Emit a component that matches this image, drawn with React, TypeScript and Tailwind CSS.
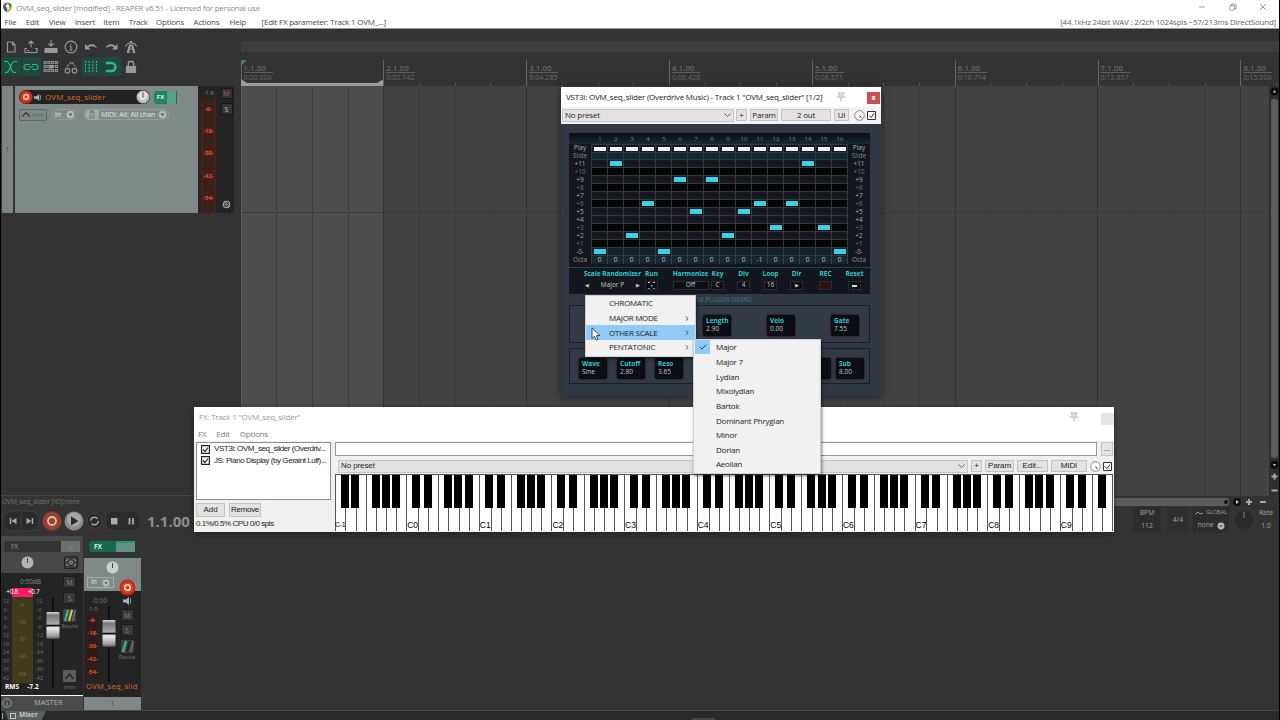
import type { ReactNode } from "react";

const MENU_BAR = ["File", "Edit", "View", "Insert", "Item", "Track", "Options", "Actions", "Help"];
const MENU_WIDTHS = ["w-[21.3px]", "w-[23px]", "w-[26px]", "w-[28.5px]", "w-[25.5px]", "w-[27.3px]", "w-[37.5px]", "w-[36px]", "w-[32px]"];

const BARS = [
  { bar: "1.1.00", time: "0:00.000" },
  { bar: "2.1.00", time: "0:02.142" },
  { bar: "3.1.00", time: "0:04.285" },
  { bar: "4.1.00", time: "0:06.428" },
  { bar: "5.1.00", time: "0:08.571" },
  { bar: "6.1.00", time: "0:10.714" },
  { bar: "7.1.00", time: "0:12.857" },
  { bar: "8.1.00", time: "0:15.000" },
];

const ROWS = ["+11", "+10", "+9", "+8", "+7", "+6", "+5", "+4", "+3", "+2", "+1", "-0-"];
const BLACK_ROWS = ["+10", "+8", "+6", "+3", "+1"];
const NOTES = [0, 11, 2, 6, 0, 9, 5, 9, 2, 5, 6, 3, 6, 11, 3, 0];

const SCALE_GROUPS = ["CHROMATIC", "MAJOR MODE", "OTHER SCALE", "PENTATONIC"];
const SCALES = ["Major", "Major 7", "Lydian", "Mixolydian", "Bartok", "Dominant Phrygian", "Minor", "Dorian", "Aeolian"];

const Icon = ({ children, active = false }: { children: ReactNode; active?: boolean }) => (
  <div className={`mr-[1px] flex h-[19px] w-[19px] shrink-0 items-center justify-center ${active ? "bg-[#1f493f] text-[#35b58a]" : "text-[#9a9a9a]"}`}>
    <svg className="size-[18px]" viewBox="0 0 18 18" fill="none" stroke="currentColor" strokeWidth="1.1">
      {children}
    </svg>
  </div>
);

const Toolbar = () => (
  <div className="flex h-[57px] w-[239.500px] shrink-0 flex-col gap-[1px] pl-[0.500px] pt-[8px]">
    <div className="flex">
      <Icon><path d="M5.500 4h5l2.500 2.500V14H5.500zM10.500 4v3H13" /></Icon>
      <Icon><path d="M9 9.500V3M6.500 5.500L9 3l2.500 2.500M5 10.500H3v4h12v-4h-2" /><path d="M5 12.500h2" /></Icon>
      <Icon><path d="M9 2v5M6.500 5.500L9 8l2.500-2.500" /><path d="M3 10.500h12v4H3z" fill="currentColor" /></Icon>
      <Icon><circle cx="9" cy="9" r="5.900" /><path d="M9 8v4M7.500 8H9M7.500 12.200h3M9 5.500v1" /></Icon>
      <Icon><path d="M3 6v5.500h5.500l-2-2c2-1.800 5.500-1.500 8.500 1-1-4.500-6-5.500-10-2.500z" fill="currentColor" stroke="none" /></Icon>
      <Icon><path d="M15.500 6v5.500H10l2-2C10 7.700 6.500 8 3.500 10.500c1-4.500 6-5.500 10-2.500z" fill="currentColor" stroke="none" /></Icon>
      <Icon><path d="M7 6.500h4l2.500 8.500h-3v-3h-3v3h-3zM8 3h2v2H8z" fill="currentColor" stroke="none" /><path d="M9 8v6" stroke="#333" /><path d="M3.500 8.500C4.500 5.500 6 5 9 5s4.500.5 5.500 3.500" /></Icon>
    </div>
    <div className="flex">
      <Icon active><path d="M2 3.500h2.500c4 0 4 11 8 11H14M15 3.500h-2.500c-4 0-4 11-8 11H3" /></Icon>
      <Icon active><path d="M8 6.500H4.500a2.500 2.500 0 000 5H8M10 6.500h3.500a2.500 2.500 0 010 5H10M6.500 9h5" /></Icon>
      <Icon>
        {[3, 7, 11].map((y) => [1.5, 5.3, 9.1, 12.9].map((x) => <rect key={`${x}-${y}`} x={x + 0.5} y={y + 0.5} width="2.200" height="2" strokeWidth="0.900" />))}
        <rect x="7.500" y="7" width="3.500" height="3.500" fill="currentColor" stroke="none" />
      </Icon>
      <Icon><circle cx="5.500" cy="12.700" r="2.300" /><circle cx="12.500" cy="12.700" r="2.300" /><path d="M5 8.500L9.500 4l4 4.500" strokeDasharray="2.500 1" /></Icon>
      <Icon active><path d="M3.500 3v12M7.200 3v12M10.900 3v12M14.600 3v12" strokeDasharray="2 1" /></Icon>
      <Icon active><path d="M4 5h5.500a4 4 0 010 8H4" strokeWidth="2.400" /></Icon>
      <Icon><path d="M4.500 8.500h9v6h-9z" fill="currentColor" /><path d="M6.300 8V6a2.700 2.700 0 015.400 0v2" strokeWidth="1.400" /></Icon>
    </div>
  </div>
);

const TitleBar = () => (
  <div className="h-[29px] shrink-0 border-b border-[#9a9a9a] bg-white text-[8px]">
    <div className="flex h-[15px] items-center pl-[1px] text-[#8c8c8c]">
      <svg className="size-[11px] shrink-0" viewBox="0 0 11 11">
        <path d="M5.500.5A5 5 0 001 3l4 7z" fill="#c8452f" />
        <path d="M5.500.5A5 5 0 0110 3L8 6.500 5.500 3z" fill="#3a9a55" />
        <path d="M1 3.500c0 4 2 6 4.500 7L5 6z" fill="#36618f" />
        <path d="M10 3.500c0 4-2 6-4.500 7L7 6z" fill="#d8a637" />
        <circle cx="5.500" cy="4" r="1.700" fill="#f3f3f3" />
      </svg>
      <span className="ml-[3px] tracking-[-0.22px]">OVM_seq_slider [modified] - REAPER v6.51 - Licensed for personal use</span>
      <svg className="ml-auto mr-[12px] h-[10px] w-[68px] -translate-y-px" viewBox="0 0 68 10" fill="none" stroke="#888" strokeWidth="0.800">
        <path d="M0 5h6M31 3.500h4.500v4.500H31zM32.500 3.500V2H37v4.500h-1.500M61 2l6 6M67 2l-6 6" />
      </svg>
    </div>
    <div className="flex h-[13px] items-center pl-[3.500px] text-[#4a4a4a]">
      {MENU_BAR.map((item, i) => (
        <span key={item} className={`shrink-0 tracking-[-0.22px] ${MENU_WIDTHS[i]}`}>{item}</span>
      ))}
      <span className="tracking-[-0.24px]">[Edit FX parameter: Track 1 OVM_...]</span>
      <span className="ml-auto mr-[3px] tracking-[-0.23px] text-[#666]">[44.1kHz 24bit WAV : 2/2ch 1024spls ~57/213ms DirectSound]</span>
    </div>
  </div>
);

const Ruler = () => (
  <div className="flex h-[57px] flex-1 flex-col overflow-hidden pt-[12px]">
    <div className="h-[11px] bg-[#3d3d3d]" />
    <div className="relative flex flex-1 items-end">
      {BARS.map(({ bar, time }, i) => (
        <div key={bar} className="relative flex h-[26px] w-[142.850px] shrink-0 items-end border-l border-[#666]">
          <div className="mb-[4px] self-end pl-[2px] text-[7.500px] leading-[8px] text-[#7d7d7d]">
            <div className="w-[29px] border-b border-[#5f5f5f] leading-[8px] tracking-[0.25px]">{bar}</div>
            <div className="text-[7px] leading-[9px] tracking-[0.05px] text-[#6c6c6c]">{time}</div>
          </div>
          <div className="absolute inset-x-0 bottom-0 flex h-[3px] justify-evenly">
            <i className="w-px bg-[#555]" /><i className="w-px bg-[#555]" /><i className="w-px bg-[#555]" />
          </div>
          {i === 0 && (
            <svg className="absolute -left-px bottom-0 h-[26px] w-[143px]" viewBox="0 0 143 26">
              <path d="M0 0h6L0 6z" fill="#45806f" />
              <path d="M0 23h143v3H0z" fill="#9b9b9b" />
              <path d="M0 19l6 4H0zM143 19l-7 4h7z" fill="#9b9b9b" />
            </svg>
          )}
        </div>
      ))}
    </div>
  </div>
);

const RoundArrow = ({ className }: { className: string }) => (
  <svg className={className} viewBox="0 0 10 10"><circle cx="5" cy="5" r="4.300" fill="#b4bab8" /><path d="M2.800 4h4.400L5 7z" fill="#525d59" /></svg>
);

const RecordDot = ({ className }: { className: string }) => (
  <svg className={className} viewBox="0 0 16 16"><circle cx="8" cy="8" r="7.500" fill="#c52b15" /><circle cx="8" cy="8" r="5.500" fill="#e43a20" /><circle cx="8" cy="8" r="2.700" fill="none" stroke="#fff0e8" strokeWidth="1.400" /></svg>
);

const Speaker = ({ className }: { className: string }) => (
  <svg className={className} viewBox="0 0 8 8" fill="#b0b5b3"><path d="M0 2.500h3L6 0v8L3 5.500H0zM7 1.500h.8v5H7z" /></svg>
);

const TrackPanel = () => (
  <div className="flex h-[127px] w-[239px] shrink-0 pl-[1px]">
    <div className="flex w-[11px] flex-col items-center justify-center bg-[#7b8582] text-[7px] text-[#46504d]">1</div>
    <div className="ml-[2px] w-[183px] bg-[#7f8a87] pl-[4px] pt-[4px]">
      <div className="flex items-center">
        <div className="flex h-[14px] w-[131px] items-center rounded-full bg-[#222] text-[8px] text-[#dc6a2c]">
          <RecordDot className="size-[14px]" />
          <Speaker className="ml-[1px] size-[7px]" />
          <span className="ml-[4px] tracking-[0.1px]">OVM_seq_slider</span>
          <svg className="ml-auto size-[14px]" viewBox="0 0 14 14"><circle cx="7" cy="7" r="6.500" fill="#b9b9b9" /><circle cx="7" cy="6" r="4.500" fill="#dedede" /><path d="M7 2.500v5" stroke="#444" /></svg>
        </div>
        <div className="ml-[4px] flex h-[13px] w-[23px] border-r border-[#4e5653]">
          <div className="flex w-[13px] items-center justify-center rounded-l-[3px] bg-[#208564] text-[6px] font-bold text-[#e0fff4]">FX</div>
          <div className="flex-1 bg-[#56a388]" />
        </div>
      </div>
      <div className="mt-[5px] flex h-[11px] items-center text-[7px] text-[#e4e8e6]">
        <div className="flex h-[12px] w-[28px] items-center justify-center gap-[2px] rounded-[2px] border border-[#5b6562] text-[6px] text-[#5b6562]">
          <svg className="h-[5px] w-[8px]" viewBox="0 0 8 5" fill="none" stroke="#2f3533" strokeWidth="1.200"><path d="M0 4.500L4 .8l4 3.700" /></svg>
          trim
        </div>
        <div className="ml-[5px] flex h-[11px] w-[26px] items-center justify-center gap-[5px] rounded-full border border-[#919b98]">
          in <RoundArrow className="size-[9px]" />
        </div>
        <div className="ml-[6px] flex h-[11px] w-[85px] items-center rounded-full border border-[#96a09d]">
          <span className="flex h-[10px] w-[14px] flex-col items-center justify-center rounded-l-full bg-[#a0a9a6] text-[5px] leading-[4.500px] text-[#48514e]"><i className="not-italic">IN</i><i className="not-italic">FX</i></span>
          <span className="ml-[2px] whitespace-nowrap text-[7px] tracking-[-0.1px]">MIDI: All: All chan</span>
          <RoundArrow className="ml-auto mr-[1px] size-[9px] shrink-0" />
        </div>
      </div>
    </div>
    <div className="flex w-[36px] justify-between bg-[#242424] pr-[1px] text-[6px]">
      <div className="flex w-[21px] flex-col items-center">
        <span className="h-[12px] leading-[15px] text-[#8d8d8d]">-1.9</span>
        <div className="flex w-[15px] flex-1 flex-col items-center justify-around border-x-2 border-[#4c2018] bg-[#38201b] pb-[4px] font-bold text-[#e4502a]">
          {["-6-", "-18-", "-30-", "-42-", "-54-"].map((db) => <span key={db} className="bg-[#47201a]">{db}</span>)}
        </div>
      </div>
      <div className="flex w-[13px] flex-col items-center pt-[2px] text-[7px]">
        <span className="flex h-[11px] w-[12px] items-center justify-center border border-[#171717] bg-[#393333] text-[#a25b55]">M</span>
        <span className="mt-[4px] flex h-[12px] w-[12px] items-center justify-center border border-[#171717] bg-[#353632] text-[#c9c998]">S</span>
        <svg className="mb-[4px] mt-auto size-[9px]" viewBox="0 0 9 9"><circle cx="4.500" cy="4.500" r="3.800" fill="#a0a0a0" /><circle cx="4.500" cy="4.500" r="2" fill="none" stroke="#333" /><path d="M2.500 6.500l4-4" stroke="#333" /></svg>
      </div>
    </div>
  </div>
);

const Arrange = () => (
  <div className="flex h-[410px] flex-1 overflow-hidden bg-[#434343]">
    {Array.from({ length: 29 }, (_, i) => (
      <div
        key={i}
        className={`w-[35.710px] shrink-0 border-l ${i === 0 ? "border-[#45665d]" : i % 4 === 0 ? "border-[#343434]" : "border-[#3d3d3d]"} ${i < 4 ? "bg-[#4d4d4d]" : ""}`}>
        <div className="h-[127px] border-b border-[#3b3b3b]" />
      </div>
    ))}
  </div>
);

const ScrollColumn = () => (
  <div className="flex h-[410px] w-[10px] shrink-0 flex-col items-center bg-[#2f2f2f]">
    <svg className="mt-px size-[9px] shrink-0" viewBox="0 0 9 9"><circle cx="4.500" cy="4.500" r="4" fill="#0c0c0c" /><path d="M3 5.500h3L4.500 3z" fill="#ccc" /></svg>
    <div className="mt-[3px] h-[359px] w-[7px] rounded-[3px] bg-[#5c5c5c]" />
    <svg className="mt-[2px] h-[36px] w-[9px] shrink-0" viewBox="0 0 9 36"><circle cx="4.500" cy="5" r="4" fill="#0c0c0c" /><path d="M3 4h3L4.500 6.500z" fill="#ccc" /><path d="M4.500 13.500v6M1.500 16.500h6M1.500 30.500h6" stroke="#aaa" strokeWidth="2" /></svg>
  </div>
);

const Transport = () => (
  <div className="flex h-[40px] shrink-0">
    <svg className="mt-[11px] h-[28px] w-[142px] shrink-0" viewBox="0 0 142 28" fill="none">
      <rect x="2" y="4" width="36" height="20" rx="9" fill="#2b2b2b" stroke="#414141" />
      <path d="M20 5v18" stroke="#414141" />
      <path d="M9.500 11v6M31.500 11v6" stroke="#aaa" strokeWidth="1.500" />
      <path d="M15.500 11v6l-5-3zM25.500 11v6l5-3z" fill="#aaa" />
      <circle cx="51" cy="14" r="9.500" fill="#954433" stroke="#6c372c" />
      <circle cx="51" cy="14" r="4" stroke="#e8bcae" strokeWidth="1.800" />
      <circle cx="73" cy="14" r="9.500" fill="#8a8a8a" />
      <circle cx="73" cy="12.500" r="7" fill="#a8a8a8" />
      <path d="M70 9.500v9l7.500-4.500z" fill="#2d2d2d" />
      <circle cx="93.500" cy="14" r="7.500" fill="#2a2a2a" stroke="#444" />
      <circle cx="93.500" cy="14" r="3.800" stroke="#a5a5a5" strokeWidth="1.500" strokeDasharray="9 3" />
      <rect x="104" y="4" width="36" height="20" rx="9" fill="#2b2b2b" stroke="#3b3b3b" />
      <path d="M110 11h6.500v6.500H110z" fill="#aaa" />
      <path d="M128.500 11v6.500M132 11v6.500" stroke="#aaa" strokeWidth="1.800" />
    </svg>
    <span className="mt-[14px] h-[24px] pl-[4px] text-[15px] font-bold leading-[22px] text-[#8e8e8e]">1.1.00</span>
    <div className="ml-auto mr-[4px] mt-[11px] flex h-[26px] text-[6.800px] text-[#a0a0a0]">
      <div className="flex w-[28px] flex-col items-center justify-around rounded-[3px] bg-[#2d2d2d]"><span>BPM</span><span>112</span></div>
      <div className="ml-[6px] flex w-[22px] items-center justify-center rounded-[3px] bg-[#2f2f2f]">4/4</div>
      <div className="ml-[4px] flex w-[36px] flex-col items-center justify-around rounded-[3px] bg-[#2d2d2d]">
        <span className="flex items-center gap-[2px] text-[5.500px]"><svg className="h-[4px] w-[9px]" viewBox="0 0 9 4" fill="none" stroke="#999"><path d="M0 3.500L3 1l2 2 3-1" /></svg>GLOBAL</span>
        <span className="flex items-center gap-[3px]">none <RoundArrow className="size-[8px]" /></span>
      </div>
      <svg className="ml-[5px] h-[26px] w-[20px]" viewBox="0 0 20 26"><circle cx="10" cy="13" r="9" fill="#292929" /><path d="M10 5v6" stroke="#888" /></svg>
      <div className="ml-[3px] flex w-[18px] flex-col items-center justify-around"><span>Rate</span><span>1.0</span></div>
    </div>
  </div>
);

const SmallButton = ({ children }: { children: ReactNode }) => (
  <div className="flex h-[12px] w-[13px] items-center justify-center rounded-[1px] border border-[#1b1b1b] bg-[#393939] text-[7px] text-[#888]">{children}</div>
);

const Fader = () => (
  <svg className="h-[90px] w-[16px]" viewBox="0 0 16 90">
    <defs>
      <linearGradient id="cap" x1="0" y1="0" x2="0" y2="1">
        <stop offset="0" stopColor="#ddd" /><stop offset=".12" stopColor="#777" /><stop offset=".45" stopColor="#aaa" />
        <stop offset=".5" stopColor="#111" /><stop offset=".58" stopColor="#eee" /><stop offset=".9" stopColor="#999" /><stop offset="1" stopColor="#444" />
      </linearGradient>
    </defs>
    <path d="M8 0v90" stroke="#0e0e0e" strokeWidth="2" />
    <rect x="1.500" y="14" width="13" height="27" rx="1" fill="url(#cap)" />
  </svg>
);

const Route = ({ second }: { second: string }) => (
  <svg className="h-[13px] w-[13px]" viewBox="0 0 13 13"><rect width="13" height="13" rx="1" fill="#414141" /><path d="M2 12L5 1" stroke="#36b184" strokeWidth="2.500" /><path d="M6 12L9 1" stroke={second} strokeWidth="2" /><path d="M9.500 12l3-11" stroke="#7b807d" strokeWidth="1" /></svg>
);

const MasterStrip = () => (
  <div className="flex h-[174px] w-[82px] flex-col bg-[#242424] text-[6.500px]">
    <div className="h-[37px] bg-[#484848] px-[3px] pt-[5px]">
      <div className="flex h-[11px] rounded-t-[3px] bg-[#343434] text-[#979797]">
        <span className="flex-1 pl-[7px] leading-[11px]">FX</span>
        <span className="flex w-[19px] items-center justify-center bg-[#68716e] text-[6px] text-[#8b9390]">◎</span>
      </div>
      <div className="flex h-[21px] items-center justify-between pl-[17px] pr-[2px]">
        <svg className="size-[13px]" viewBox="0 0 13 13"><circle cx="6.500" cy="6.500" r="6" fill="#b4b4b4" /><path d="M6.500 2v5" stroke="#444" /></svg>
        <div className="flex h-[13px] w-[14px] items-center justify-center rounded-[2px] border border-[#242424] bg-[#3a3a3a]">
          <svg className="h-[7px] w-[10px]" viewBox="0 0 10 7" fill="none" stroke="#aaa" strokeWidth="0.900"><path d="M2.500.5a3 3 0 000 6M7.500.5a3 3 0 010 6" /><circle cx="5" cy="3.500" r="1.500" /></svg>
        </div>
      </div>
    </div>
    <div className="flex flex-1">
      <div className="flex w-[44px] flex-col">
        <span className="h-[15px] pl-[19px] leading-[17px] text-[#888]">0:00dB</span>
        <div className="mx-auto flex h-[9px] w-[36px] items-center justify-center whitespace-nowrap tracking-[-0.3px] text-white">
          <span className="flex h-[9px] w-[21px] items-center justify-between rounded-[1px] bg-[#f81d60]"><i className="-ml-[6px] not-italic">+0.8</i><i className="-mr-[6px] not-italic">+0.7</i></span>
        </div>
        <div className="flex h-[86px] justify-between text-[5.500px] leading-none text-[#6f6f6f]">
          <div className="flex w-[10px] flex-col items-center justify-between py-[2px]">{["12", "6-", "0-", "6-", "12", "18", "24", "30", "36", "42"].map((v, i) => <span key={i}>{v}</span>)}</div>
          <div className="flex w-[21px] flex-col items-center justify-around bg-[#403b1b] text-[#7b733a]">{["-6-", "-18-", "-30-", "-42-", "-54-"].map((v) => <span key={v}>{v}</span>)}</div>
          <div className="flex w-[11px] flex-col items-center justify-between py-[2px]">{["12", "-6", "-0", "-6", "-12", "-18", "-24", "-30", "-36", "-42"].map((v, i) => <span key={i}>{v}</span>)}</div>
        </div>
        <div className="flex justify-between pl-[4px] pr-[6px] font-bold leading-[8px] text-white"><span>RMS</span><span>-7.2</span></div>
      </div>
      <div className="w-[17px] pt-[25px]"><Fader /></div>
      <div className="flex flex-1 flex-col items-center pr-[5px] pt-[3px]">
        <SmallButton>M</SmallButton>
        <div className="mt-[4px]"><SmallButton>S</SmallButton></div>
        <div className="mt-[5px]"><Route second="#d6ca48" /></div>
        <span className="text-[6px] leading-[8px] text-[#777]">Route</span>
        <svg className="mt-auto h-[13px] w-[13px]" viewBox="0 0 13 13"><rect width="13" height="12" rx="1" fill="#5c5c5c" /><path d="M2.500 9L6.500 4l4 5" fill="none" stroke="#222" strokeWidth="1.300" /></svg>
        <span className="mb-[3px] text-[6px] leading-[9px] text-[#777]">trim</span>
      </div>
    </div>
    <div className="flex h-[15px] items-center border-t border-t-white bg-[#4b4b4b] pl-[1px] text-[7.500px] text-[#b5b5b5]">
      <svg className="size-[10px]" viewBox="0 0 10 10" fill="none" stroke="#999"><circle cx="5" cy="5" r="4.300" /><path d="M5 4.500v3M5 2.500v1" /></svg>
      <span className="ml-[22px]">MASTER</span>
    </div>
  </div>
);

const TrackStrip = () => (
  <div className="ml-[1px] flex h-[174px] w-[57px] flex-col bg-[#242424] text-[6.500px]">
    <div className="h-[22px] bg-[#333] pl-[5px] pt-[5px]">
      <div className="flex h-[11px] w-[46px]">
        <span className="flex-1 rounded-l-[3px] bg-[#17694f] pl-[5px] font-bold leading-[11px] text-[#d5efe5]">FX</span>
        <span className="w-[19px] border-t-2 border-[#259b74] bg-[#658f82]" />
      </div>
    </div>
    <div className="relative h-[33px] bg-[#7f8a87] pt-[3px]">
      <svg className="mx-auto size-[13px]" viewBox="0 0 13 13"><circle cx="6.500" cy="6.500" r="6" fill="#cbd0ce" /><path d="M6.500 2v5" stroke="#444" /></svg>
      <div className="ml-[3px] mt-[3px] flex h-[11px] w-[27px] items-center justify-center gap-[5px] border border-[#a5aeab] text-[#e0e4e2]">in <RoundArrow className="size-[8px]" /></div>
      <RecordDot className="absolute -bottom-[5px] right-[5px] size-[17px]" />
    </div>
    <div className="flex flex-1">
      <div className="flex w-[17px] flex-col items-center">
        <span className="mt-[6px] whitespace-nowrap pl-[14px] leading-[8px] text-[#777]">-0:00</span>
        <span className="text-[6px] leading-[9px] text-[#8d7368]">-1.9</span>
        <div className="flex h-[64px] w-[11px] flex-col items-center justify-around bg-[#2e1c17] text-[6px] font-bold leading-none text-[#e4502a]">{["-6-", "-18-", "-30-", "-42-", "-54-"].map((v) => <span key={v}>{v}</span>)}</div>
      </div>
      <div className="h-[91px] w-[16px] overflow-hidden pt-[15px]"><Fader /></div>
      <div className="flex flex-1 flex-col items-center pr-[4px] pt-[6px]">
        <Speaker className="size-[8px]" />
        <div className="mt-[4px]"><SmallButton>M</SmallButton></div>
        <div className="mt-[3px]"><SmallButton>S</SmallButton></div>
        <div className="mt-[4px]"><Route second="#222" /></div>
        <span className="text-[6px] leading-[8px] text-[#777]">Route</span>
      </div>
    </div>
    <div className="h-[15px] whitespace-nowrap pl-[2px] text-[7.500px] leading-[9px] tracking-[0.3px] text-[#dc6a2c]">OVM_seq_slid</div>
    <div className="flex h-[13px] items-center justify-center bg-[#7f8a87] text-[7px] text-[#47504d]">1</div>
  </div>
);

const Pin = ({ className }: { className: string }) => (
  <svg className={className} viewBox="0 0 10 10" fill="none" stroke="#aaa" strokeWidth="0.900"><path d="M1.500 1h7M3 1v3.500M7 1v3.500M.5 5h9M5 5v4.500M4 3h2" /></svg>
);

const WinButton = ({ children, className }: { children: ReactNode; className: string }) => (
  <div className={`flex h-[12px] shrink-0 items-center justify-center border border-[#c4c4c4] bg-[#e3e3e3] ${className}`}>{children}</div>
);

const Preset = ({ className }: { className: string }) => (
  <div className={`flex h-[13px] shrink-0 items-center justify-between border border-[#c6c6c6] bg-[#e2e2e2] px-[2px] ${className}`}>
    No preset
    <svg className="h-[4px] w-[7px]" viewBox="0 0 7 4" fill="none" stroke="#555" strokeWidth="0.900"><path d="M.5.5l3 3 3-3" /></svg>
  </div>
);

const WetAndBypass = () => (
  <>
    <svg className="size-[11px] shrink-0" viewBox="0 0 11 11" fill="none" stroke="#888"><circle cx="5.500" cy="5.500" r="4.800" fill="#fafafa" /><path d="M5.500 5.500l2 2.500" stroke="#333" /></svg>
    <svg className="ml-[2px] size-[9px] shrink-0" viewBox="0 0 9 9" fill="#fff" stroke="#333"><path d="M.5.5h8v8h-8z" /><path d="M2 4.500l2 2 3-4" fill="none" /></svg>
  </>
);

const FaderRow = ({ label }: { label: string }) => (
  <div className="flex h-[8px]">
    {NOTES.map((note, i) => (
      <div
        key={i}
        className={`flex w-[16px] items-center justify-center border-b border-r border-[#36363e] ${label === "-0-" ? "bg-[#14222b]" : BLACK_ROWS.includes(label) ? "bg-[#060609]" : "bg-[#17171f]"}`}>
        {note === (label === "-0-" ? 0 : Number(label)) && <div className="h-[5px] w-[12px] bg-[#35d5e4]" />}
      </div>
    ))}
  </div>
);

const RowLabels = () => (
  <div className="flex w-[23px] flex-col items-center text-[6.500px] leading-[8px] text-[#a9adb0]">
    <span>Play</span>
    <span className="text-[#81868a]">Slide</span>
    {ROWS.map((r) => <span key={r} className={BLACK_ROWS.includes(r) ? "text-[#6b6f73]" : ""}>{r}</span>)}
    <span className="text-[#8b9094]">Octa</span>
  </div>
);

const Control = ({ label, className, children }: { label: string; className: string; children?: ReactNode }) => (
  <div className={`flex shrink-0 flex-col items-center ${className}`}>
    <span className="whitespace-nowrap text-[6.500px] font-bold leading-[9px] text-[#32c8cf]">{label}</span>
    <span className="mt-[3px] flex h-[9px] w-full items-center justify-center">{children}</span>
  </div>
);

const Cell = ({ children, className = "w-[13px] bg-[#0d0e13]" }: { children?: ReactNode; className?: string }) => (
  <span className={`flex h-[9px] items-center justify-center border border-[#292c33] ${className}`}>{children}</span>
);

const Knob = ({ label, value }: { label: string; value: string }) => (
  <div className="flex h-[21px] w-[28px] shrink-0 flex-col justify-center rounded-[2px] border border-[#0a0b0e] bg-[#0c0e13] pl-[2px] text-[6.500px] leading-[8px] shadow-[0_0_2px_#090a0d]">
    <span className="font-bold text-[#32c8cf]">{label}</span>
    <span className="text-[#c5c8ca]">{value}</span>
  </div>
);

const PluginWindow = () => (
  <div className="absolute left-[560px] top-[87px] flex h-[309px] w-[320px] flex-col bg-[#2f3843] text-[8px] text-[#222] shadow-[0_1px_8px_rgba(0,0,0,0.5)]">
    <div className="flex h-[20px] shrink-0 items-center bg-white pb-px pl-[5px]">
      <span className="whitespace-nowrap tracking-[-0.2px]">VST3i: OVM_seq_slider (Overdrive Music) - Track 1 "OVM_seq_slider" [1/2]</span>
      <Pin className="ml-auto mr-[21px] size-[10px]" />
      <div className="mr-px mt-[2px] flex h-[12px] w-[13px] items-center justify-center bg-[#c75050] pb-px text-[7px] font-bold text-white">x</div>
    </div>
    <div className="flex h-[17px] shrink-0 items-center bg-[#f2f2f2] pb-[1px] pl-[1px] tracking-[-0.2px]">
      <Preset className="w-[172px]" />
      <WinButton className="ml-[2px] w-[11px]">+</WinButton>
      <WinButton className="ml-[3px] w-[28px]">Param</WinButton>
      <WinButton className="ml-[3px] w-[50px]">2 out</WinButton>
      <WinButton className="ml-[3px] mr-[5px] w-[15px]">UI</WinButton>
      <WetAndBypass />
    </div>
    <div className="mx-[8px] mt-[9px] h-[134px] w-[301px] shrink-0 bg-[#14161d]">
      <div className="flex h-[11px] items-center bg-gradient-to-b from-[#0b0c10] to-[#122b32] pl-[23px] text-[6px] text-[#4c908f]">
        {NOTES.map((_, i) => <span key={i} className="w-[16px] text-center">{i + 1}</span>)}
      </div>
      <div className="flex">
        <RowLabels />
        <div className="w-[257px] border-l border-t border-[#36363e]">
          <div className="flex h-[7px]">
            {NOTES.map((_, i) => <div key={i} className="flex w-[16px] items-center justify-center border-r border-[#36363e]"><div className="h-[4px] w-[12px] bg-[#eef3f4]" /></div>)}
          </div>
          <div className="flex h-[8px] bg-[#142730]">
            {NOTES.map((_, i) => <div key={i} className="w-[16px] border-y border-r border-[#273c46]" />)}
          </div>
          {ROWS.map((label) => <FaderRow key={label} label={label} />)}
          <div className="flex h-[8px] bg-[#15252e] text-[6.500px] leading-[8px] text-[#bfc4c6]">
            {NOTES.map((_, i) => <div key={i} className="w-[16px] border-r border-[#36434b] text-center">{i === 10 ? "-1" : "0"}</div>)}
          </div>
        </div>
        <RowLabels />
      </div>
    </div>
    <div className="mx-[8px] h-[27px] w-[301px] shrink-0 border-t border-[#353d47] bg-[#14161d] pt-[1px] text-[6.500px] text-[#c5c8ca]">
      <div className="flex pl-[15.500px]">
        <Control label="Scale Randomizer" className="w-[56px]">
          <span className="flex w-full items-center justify-between text-[6.500px]"><i className="text-[5px] not-italic">◀</i>Major P<i className="text-[5px] not-italic">▶</i></span>
        </Control>
        <Control label="Run" className="w-[22px]">
          <Cell><svg className="size-[7px]" viewBox="0 0 8 8" fill="#ccc"><path d="M0 0h2v1H0zM6 0h2v1H6zM3.500 3.500h1.500v1.500H3.500zM0 7h2v1H0zM6 7h2v1H6z" /></svg></Cell>
        </Control>
        <Control label="Harmonize" className="ml-[10px] w-[36px]"><Cell className="w-full bg-[#0d0e13]">Off</Cell></Control>
        <Control label="Key" className="w-[18px]"><Cell>C</Cell></Control>
        <Control label="Div" className="ml-[8px] w-[18px]"><Cell>4</Cell></Control>
        <Control label="Loop" className="ml-[8px] w-[20px]"><Cell>16</Cell></Control>
        <Control label="Dir" className="ml-[7px] w-[18px]"><Cell><i className="text-[5px] not-italic">▶</i></Cell></Control>
        <Control label="REC" className="ml-[10px] w-[20px]"><Cell className="w-[13px] bg-[#300d11]" /></Control>
        <Control label="Reset" className="ml-[8px] w-[22px]"><Cell><i className="h-[2px] w-[5px] bg-[#ddd]" /></Cell></Control>
      </div>
    </div>
    <div className="ml-[127px] h-[9px] whitespace-nowrap text-[6.800px] leading-[11px] text-[#3f7781]">OVM PLUGIN DEMO</div>
    <div className="ml-[8px] mt-[2px] flex h-[38px] w-[301px] shrink-0 items-center justify-end gap-[36px] border border-[#1a1f26] bg-[#313a45] pr-[10px] pt-[2px]">
      <Knob label="Length" value="2.90" />
      <Knob label="Velo" value="0.00" />
      <Knob label="Gate" value="7.55" />
    </div>
    <div className="ml-[8px] mt-[5px] flex h-[36px] w-[301px] shrink-0 items-center gap-[10px] border border-[#1a1f26] bg-[#313a45] pl-[9px] pr-[5px] pt-[4px]">
      <Knob label="Wave" value="Sine" />
      <Knob label="Cutoff" value="2.80" />
      <Knob label="Reso" value="3.65" />
      <div className="ml-auto flex gap-[5px]">
        <Knob label="" value="" />
        <Knob label="Sub" value="8.00" />
      </div>
    </div>
  </div>
);

const Key = ({ index }: { index: number }) => {
  const step = index % 7;
  const hasBlack = step !== 2 && step !== 6 && index !== 74;
  return (
    <div className="relative flex flex-1 items-end border-l border-[#555] pb-[1px]">
      {step === 0 && (
        <span className={`whitespace-nowrap leading-[10px] text-black ${index === 0 ? "-ml-px text-[7px] tracking-[-0.3px]" : "text-[8.500px]"}`}>C{index / 7 - 1}</span>
      )}
      {hasBlack && <div className="absolute left-[5px] top-0 z-10 h-[33px] w-[8px] bg-black" />}
    </div>
  );
};

const FxItem = ({ children }: { children: ReactNode }) => (
  <div className="flex h-[11.500px] items-center whitespace-nowrap">
    <svg className="mr-[4px] size-[9px] shrink-0" viewBox="0 0 9 9" fill="none" stroke="#222" strokeWidth="1.200"><path d="M.6.6h7.800v7.800H.6z" /><path d="M2 4.500l2 2 3-4" /></svg>
    {children}
  </div>
);

const FxWindow = () => (
  <div className="absolute left-[193px] top-[407px] flex h-[125px] w-[920px] flex-col bg-[#f0f0f0] text-[8px] text-[#222] shadow-[0_1px_6px_rgba(0,0,0,0.4)]">
    <div className="flex h-[20px] shrink-0 items-center bg-white pl-[5px] text-[#9a9a9a]">
      <span className="tracking-[-0.2px]">FX: Track 1 "OVM_seq_slider"</span>
      <Pin className="ml-auto mr-[22px] size-[10px]" />
      <div className="mt-[3px] h-[12px] w-[13px] bg-[#e6e6e6]" />
    </div>
    <div className="flex h-[14px] shrink-0 items-center gap-[10px] bg-white pl-[4px] tracking-[-0.2px] text-[#777]">
      <span>FX</span><span>Edit</span><span>Options</span>
    </div>
    <div className="flex flex-1 font-['Liberation_Sans',sans-serif]">
      <div className="w-[141px] pl-[2px] pt-[1px]">
        <div className="h-[58px] w-[135px] overflow-hidden border border-[#8c8c8c] bg-white pl-[4px] pt-[0.500px] text-[8px] tracking-[-0.45px]">
          <FxItem>VST3i: OVM_seq_slider (Overdriv...</FxItem>
          <FxItem>JS: Piano Display (by Geraint Luff)...</FxItem>
        </div>
        <div className="mt-[3px] flex gap-[4px]">
          <WinButton className="h-[14px] w-[29px]">Add</WinButton>
          <WinButton className="h-[14px] w-[32px] tracking-[-0.3px]">Remove</WinButton>
        </div>
        <div className="mt-[2px] whitespace-nowrap leading-[10px] tracking-[-0.45px]">0.1%/0.5% CPU 0/0 spls</div>
      </div>
      <div className="flex w-[779px] flex-col pt-[1px]">
        <div className="flex gap-[4px]">
          <div className="h-[14px] w-[762px] border border-[#9a9a9a] bg-white" />
          <WinButton className="h-[14px] w-[12px]">...</WinButton>
        </div>
        <div className="mt-[3px] flex h-[14px] items-center pl-[3px] tracking-[-0.1px]">
          <Preset className="w-[630px]" />
          <WinButton className="ml-[3px] w-[11px]">+</WinButton>
          <WinButton className="ml-[3px] w-[29px]">Param</WinButton>
          <WinButton className="ml-[3px] w-[31px]">Edit...</WinButton>
          <WinButton className="ml-[3px] mr-[3px] w-[36px]">MIDI</WinButton>
          <WetAndBypass />
        </div>
        <div className="mt-[1px] flex h-[57px] w-[778px] border-r border-t border-[#555] bg-white">
          {Array.from({ length: 75 }, (_, i) => <Key key={i} index={i} />)}
        </div>
      </div>
    </div>
  </div>
);

const ScaleMenu = () => (
  <div className="absolute left-[584px] top-[295px] h-[62px] w-[111px] border border-[#d0d0d0] bg-[#f1f1f1] text-[8px] text-[#222] shadow-[1px_2px_3px_rgba(0,0,0,0.5)]">
    {SCALE_GROUPS.map((group, i) => (
      <div key={group} className={`flex h-[14.700px] items-center justify-between pl-[23px] pr-[6px] tracking-[-0.25px] ${i === 2 ? "bg-[#91c9f7]" : ""}`}>
        {group}
        {i > 0 && <svg className="h-[5px] w-[4px]" viewBox="0 0 4 5" fill="none" stroke="#333" strokeWidth="0.900"><path d="M.8.3L3 2.500.8 4.700" /></svg>}
      </div>
    ))}
    <svg className="absolute left-[5px] top-[31px] h-[14px] w-[10px]" viewBox="0 0 10 14"><path d="M1 .8v10.700l2.500-2.200 1.800 3.900 1.800-.8-1.700-3.800H9z" fill="#fff" stroke="#333" strokeWidth="0.900" /></svg>
  </div>
);

const ScaleSubmenu = () => (
  <div className="absolute left-[692px] top-[339px] h-[135px] w-[128px] border border-[#cfcfcf] bg-[#f1f1f1] text-[8px] text-[#222] shadow-[1px_2px_3px_rgba(0,0,0,0.5)]">
    {SCALES.map((scale, i) => (
      <div key={scale} className="flex h-[14.650px] items-center pl-[1px] tracking-[-0.23px]">
        <div className={`mr-[6px] flex h-[14px] w-[15px] items-center justify-center ${i === 0 ? "bg-[#91c9f7]" : ""}`}>
          {i === 0 && <svg className="h-[6px] w-[8px]" viewBox="0 0 8 6" fill="none" stroke="#1b4a78"><path d="M.8 3l2.200 2L7.200.7" /></svg>}
        </div>
        {scale}
      </div>
    ))}
  </div>
);

const App = () => {
  return (
    <div className="relative flex h-[720px] w-[1280px] flex-col overflow-hidden border-x border-black bg-[#333] font-['Open_Sans',sans-serif] leading-none">
      <TitleBar />
      <div className="flex shrink-0">
        <Toolbar />
        <Ruler />
      </div>
      <div className="flex h-[410px] shrink-0">
        <div className="w-[239.500px] shrink-0 border-b border-[#484848]"><TrackPanel /></div>
        <Arrange />
        <ScrollColumn />
      </div>
      <div className="flex h-[11px] shrink-0 items-center justify-between">
        <span className="pl-[1px] pt-px text-[6.500px] text-[#747474]">OVM_seq_slider [IO]:none</span>
        <div className="mr-[10px] flex h-[11px] w-[1028px] items-center">
          <div className="flex h-[8px] w-[988px] items-center justify-end rounded-[3px] bg-[#5c5c5c] pr-[1px]"><i className="size-[4px] rounded-full bg-[#161616]" /></div>
          <svg className="h-[10px] w-[40px]" viewBox="0 0 40 10"><circle cx="8" cy="5" r="4" fill="#0d0d0d" /><path d="M7 3l3 2-3 2z" fill="#ccc" /><path d="M20 2v6M17 5h6M31 5h6" stroke="#aaa" strokeWidth="2" /></svg>
        </div>
      </div>
      <div className="-mt-[11px] shrink-0"><Transport /></div>
      <div className="flex shrink-0">
        <MasterStrip />
        <TrackStrip />
      </div>
      <div className="flex h-[10px] shrink-0 items-center border-t border-[#484848] bg-[#292929] pl-[1px]">
        <i className="h-[6px] w-px bg-[#999]" />
        <div className="ml-[2px] flex h-[9px] w-[41px] items-center gap-[3px] bg-[#56605d] pl-[5px] text-[6.500px] font-bold text-[#c2c8c6] [clip-path:polygon(0_0,100%_0,90%_100%,8%_100%)]">
          <i className="size-[6px] border border-[#c2c8c6]" />
          Mixer
        </div>
        <i className="ml-[646px] mt-[6px] h-[2px] w-[23px] bg-[#444]" />
      </div>
      <FxWindow />
      <PluginWindow />
      <ScaleMenu />
      <ScaleSubmenu />
    </div>
  );
};

export default App;
